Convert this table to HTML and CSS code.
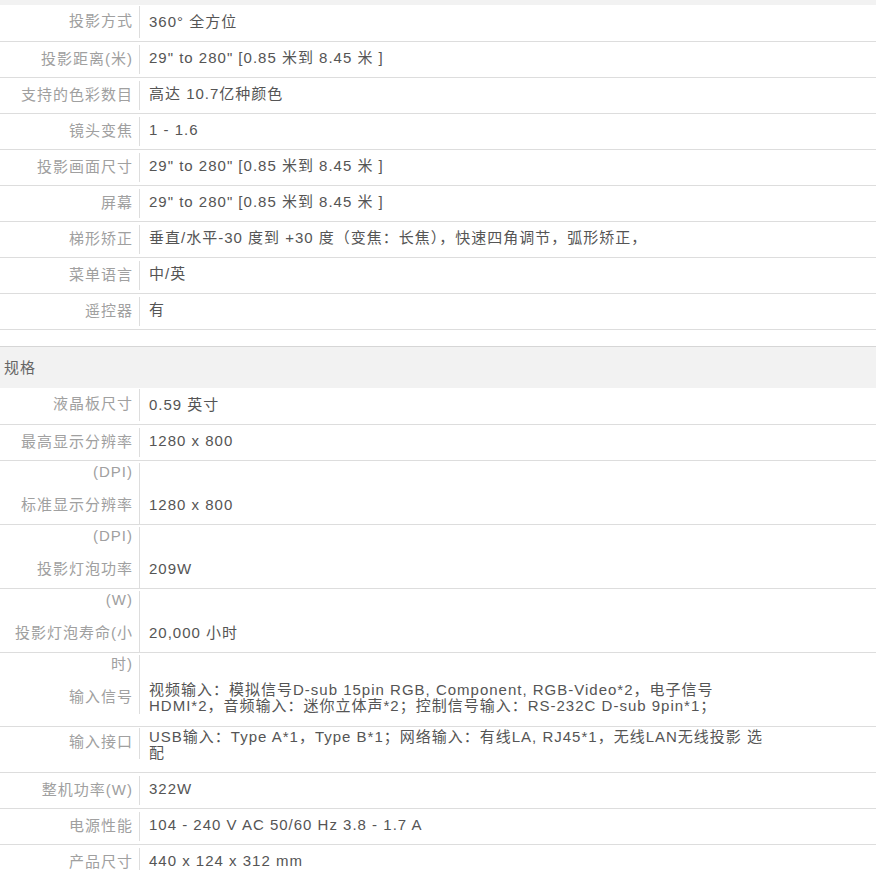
FILE: index.html
```html
<!DOCTYPE html>
<html lang="zh-CN">
<head>
<meta charset="utf-8">
<title>规格参数</title>
<link rel="stylesheet" href="styles.css">
</head>
<body>
<div class="topbar"></div>
<section class="spec">
  <div class="row row-first"><div class="label">投影方式</div><div class="value">360° 全方位</div></div>
  <div class="row"><div class="label">投影距离(米)</div><div class="value">29" to 280" [0.85 米到 8.45 米 ]</div></div>
  <div class="row"><div class="label">支持的色彩数目</div><div class="value">高达 10.7亿种颜色</div></div>
  <div class="row"><div class="label">镜头变焦</div><div class="value">1 - 1.6</div></div>
  <div class="row"><div class="label">投影画面尺寸</div><div class="value">29" to 280" [0.85 米到 8.45 米 ]</div></div>
  <div class="row"><div class="label">屏幕</div><div class="value">29" to 280" [0.85 米到 8.45 米 ]</div></div>
  <div class="row"><div class="label">梯形矫正</div><div class="value">垂直/水平-30 度到 +30 度（变焦：长焦），快速四角调节，弧形矫正，</div></div>
  <div class="row"><div class="label">菜单语言</div><div class="value">中/英</div></div>
  <div class="row"><div class="label">遥控器</div><div class="value">有</div></div>
</section>
<section class="spec spec-second">
  <div class="section-head">规格</div>
  <div class="row row-first"><div class="label">液晶板尺寸</div><div class="value">0.59 英寸</div></div>
  <div class="row"><div class="label">最高显示分辨率</div><div class="value">1280 x 800</div></div>
  <div class="row row-tall"><div class="label"><span class="line">(DPI)</span><span class="line">标准显示分辨率</span></div><div class="value">1280 x 800</div></div>
  <div class="row row-tall"><div class="label"><span class="line">(DPI)</span><span class="line">投影灯泡功率</span></div><div class="value">209W</div></div>
  <div class="row row-tall"><div class="label"><span class="line">(W)</span><span class="line">投影灯泡寿命(小</span></div><div class="value">20,000 小时</div></div>
  <div class="row row-input"><div class="label"><span class="line">时)</span><span class="line">输入信号</span></div><div class="value">视频输入：模拟信号D-sub 15pin RGB, Component, RGB-Video*2，电子信号HDMI*2，音频输入：迷你立体声*2；控制信号输入：RS-232C D-sub 9pin*1；</div></div>
  <div class="row row-iface"><div class="label">输入接口</div><div class="value">USB输入：Type A*1，Type B*1；网络输入：有线LA, RJ45*1，无线LAN无线投影 选配</div></div>
  <div class="row"><div class="label">整机功率(W)</div><div class="value">322W</div></div>
  <div class="row"><div class="label">电源性能</div><div class="value">104 - 240 V AC 50/60 Hz 3.8 - 1.7 A</div></div>
  <div class="row"><div class="label">产品尺寸</div><div class="value">440 x 124 x 312 mm</div></div>
</section>
</body>
</html>
```

FILE: styles.css
```css
html, body {
  margin: 0;
  padding: 0;
  background: #fff;
}

body {
  font-family: "Liberation Sans", "Noto Sans CJK SC", sans-serif;
  font-size: 15px;
  letter-spacing: 1px;
  color: #555;
}

.topbar {
  height: 5px;
  background: #f2f2f2;
}

.spec-second {
  margin-top: 16px;
}

.section-head {
  border-top: 1px solid #d6d6d6;
  background: #f2f2f2;
  height: 41px;
  line-height: 41px;
  padding-left: 4px;
  color: #666;
}

.row {
  display: flex;
  height: 35px;
  border-bottom: 1px solid #ddd;
}

.label {
  box-sizing: border-box;
  flex: none;
  width: 140px;
  height: 29px;
  margin: 3px 0;
  padding-right: 6px;
  border-right: 1px solid #ddd;
  text-align: right;
  line-height: 27px;
  color: #a0a0a0;
  white-space: nowrap;
}

.label .line {
  display: block;
}

.label .line + .line {
  margin-top: 16px;
}

.value {
  box-sizing: border-box;
  flex: none;
  width: 634px;
  padding-left: 9px;
  line-height: 31px;
}

.row-first {
  height: 36px;
}

.row-first .label {
  margin: 1px 0 3px;
  height: 32px;
  line-height: 30px;
}

.row-first .value {
  line-height: 33px;
}

.row-tall {
  height: 63px;
}

.row-tall .label {
  margin: 2px 0 0;
  height: 61px;
  line-height: 17px;
}

.row-tall .value {
  padding-top: 35px;
  line-height: 17px;
}

.row-input {
  height: 73px;
}

.row-input .label {
  margin: 2px 0 0;
  height: 59px;
  line-height: 17px;
}

.row-input .value {
  padding-top: 29px;
  line-height: 16px;
}

.row-iface {
  height: 45px;
}

.row-iface .label {
  margin: 1px 0 0;
  height: 31px;
  line-height: 28px;
}

.row-iface .value {
  padding-top: 2px;
  line-height: 16px;
}
```
